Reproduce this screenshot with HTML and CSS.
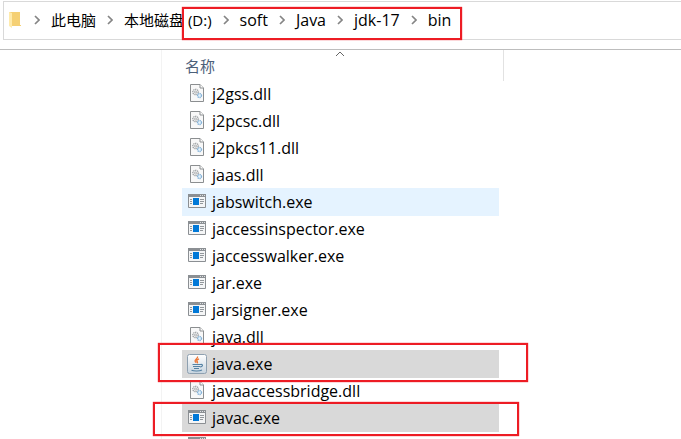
FILE: index.html
```html
<!DOCTYPE html>
<html lang="zh-CN">
<head>
<meta charset="utf-8">
<title>bin</title>
<link rel="stylesheet" href="styles.css">
</head>
<body>
<svg class="defs" aria-hidden="true">
  <symbol id="chevron" viewBox="0 0 6 10"><path d="M1 1l4 4-4 4" fill="none" stroke="#858585" stroke-width="1.7"/></symbol>
  <symbol id="dll" viewBox="0 0 20 20">
    <path d="M3.5 .5H13l3.500 3.500v13.500h-13z" fill="#f8f8f8" stroke="#8b8e90"/>
    <path d="M13 .5v3.500h3.500" fill="#fff" stroke="#8b8e90"/>
    <circle cx="8.500" cy="8" r="2.700" fill="#f4f4f4" stroke="#9a9ea1" stroke-width="1.300" stroke-dasharray="1.300 .7"/>
    <circle cx="8.500" cy="8" r="1" fill="#fff" stroke="#8e9295" stroke-width=".7"/>
    <circle cx="12.500" cy="11.500" r="2" fill="#e5f2fb" stroke="#86b3d8" stroke-width="1.400" stroke-dasharray="1.200 .5"/>
  </symbol>
  <symbol id="exe" viewBox="0 0 20 20">
    <path d="M1.500 2.500h17v13h-17z" fill="#f4f5f6" stroke="#8b8f93"/>
    <path d="M1 2h18v3H1z" fill="#8b8f93"/>
    <path d="M13 3h1v1h-1zM15 3h1v1h-1zM17 3h1v1h-1z" fill="#dde0e2"/>
    <path d="M6 6h6v7H6z" fill="#0078d7"/>
    <path d="M3 7.500h2M3 9.500h2M3 11.500h2M13 7.500h4M13 9.500h4M13 11.500h3" stroke="#92979b"/>
  </symbol>
  <symbol id="java" viewBox="0 0 20 20">
    <linearGradient id="tile" x1="0" y1="0" x2="0" y2="1"><stop stop-color="#fff"/><stop offset="1" stop-color="#c7d4df"/></linearGradient>
    <rect x=".5" y=".5" width="19" height="19" rx="2" fill="url(#tile)" stroke="#8ea0b0"/>
    <path d="M10.500 2.500c1 2-3.500 3-2.300 5l1 1.200M12 4.800c-3 1.200-2.500 2-1.600 3 .4.500 0 1-.5 1.500" fill="none" stroke="#ed7534" stroke-width="1.300"/>
    <path d="M5.500 10.500h8M6 12.500h7M7 14.500h5M13.500 10.500c3-.6 2.500 2.300-.5 2.500M4.500 16.300c2.500 1 8 1 10.500-.3" fill="none" stroke="#5482a4" stroke-width="1.100"/>
  </symbol>
</svg>
<header class="toolbar">
  <nav class="address" aria-label="路径">
    <svg class="folder" viewBox="0 0 12 18" aria-hidden="true"><path d="M0 1h11v13h1v1H3z" fill="#f5d074"/><path d="M0 1l3 1v15l-3-2z" fill="#ffebac"/></svg>
    <svg class="chevron"><use href="#chevron"/></svg>
    <a class="crumb han" href="#">此电脑</a>
    <svg class="chevron"><use href="#chevron"/></svg>
    <a class="crumb han" href="#">本地磁盘 (D:)</a>
    <svg class="chevron"><use href="#chevron"/></svg>
    <a class="crumb" href="#">soft</a>
    <svg class="chevron"><use href="#chevron"/></svg>
    <a class="crumb" href="#">Java</a>
    <svg class="chevron"><use href="#chevron"/></svg>
    <a class="crumb" href="#">jdk-17</a>
    <svg class="chevron"><use href="#chevron"/></svg>
    <a class="crumb" href="#">bin</a>
    <span class="mark mark-path"></span>
  </nav>
</header>
<div class="explorer">
  <aside class="side"></aside>
  <main class="content">
    <button class="column han" type="button">名称<svg class="sort" viewBox="0 0 10 6" aria-hidden="true"><path d="M1 5l4-4 4 4" fill="none" stroke="#666"/></svg></button>
    <ul class="files">
      <li class="file"><svg class="icon"><use href="#dll"/></svg>j2gss.dll</li>
      <li class="file"><svg class="icon"><use href="#dll"/></svg>j2pcsc.dll</li>
      <li class="file"><svg class="icon"><use href="#dll"/></svg>j2pkcs11.dll</li>
      <li class="file"><svg class="icon"><use href="#dll"/></svg>jaas.dll</li>
      <li class="file hover"><svg class="icon"><use href="#exe"/></svg>jabswitch.exe</li>
      <li class="file"><svg class="icon"><use href="#exe"/></svg>jaccessinspector.exe</li>
      <li class="file"><svg class="icon"><use href="#exe"/></svg>jaccesswalker.exe</li>
      <li class="file"><svg class="icon"><use href="#exe"/></svg>jar.exe</li>
      <li class="file"><svg class="icon"><use href="#exe"/></svg>jarsigner.exe</li>
      <li class="file"><svg class="icon"><use href="#dll"/></svg>java.dll</li>
      <li class="file selected"><svg class="icon"><use href="#java"/></svg>java.exe<span class="mark mark-java"></span></li>
      <li class="file"><svg class="icon"><use href="#dll"/></svg>javaaccessbridge.dll</li>
      <li class="file selected"><svg class="icon"><use href="#exe"/></svg>javac.exe<span class="mark mark-javac"></span></li>
      <li class="file"><svg class="icon"><use href="#exe"/></svg></li>
    </ul>
  </main>
</div>
</body>
</html>
```
FILE: styles.css
```css
* { box-sizing: border-box; }
body {
  margin: 0;
  height: 100vh;
  overflow: hidden;
  display: flex;
  flex-direction: column;
  background: #fff;
  color: #000;
  font: 16px/20px "Open Sans", "Noto Sans CJK SC", sans-serif;
}
.defs { position: absolute; width: 0; height: 0; }
.toolbar {
  flex: none;
  padding: 1px 0 9px 3px;
  border-bottom: 1px solid #bdbdbd;
}
.address {
  position: relative;
  display: flex;
  align-items: center;
  gap: 11px;
  height: 39px;
  padding: 0 0 2px 5px;
  border: 1px solid #d9d9d9;
  border-right: 0;
}
.folder { width: 12px; height: 18px; margin-right: 2px; }
.chevron { width: 6px; height: 10px; }
.crumb { color: inherit; text-decoration: none; white-space: pre; }
.crumb.han, .column.han { font-size: 15px; }
.explorer { flex: 1; min-height: 0; display: flex; }
.side { width: 162px; border-right: 1px solid #f3f3f3; }
.content { flex: 1; min-width: 0; }
.column {
  position: relative;
  display: block;
  width: 342px;
  height: 31px;
  margin: 0 0 -1px;
  padding: 0 0 0 23px;
  border: 0;
  border-right: 1px solid #e2e2e2;
  background: none;
  color: #4c607a;
  font: inherit;
  text-align: left;
}
.sort { position: absolute; top: 1px; left: 173px; width: 10px; height: 6px; }
.files {
  width: 317px;
  margin: 0 0 0 20px;
  padding: 0;
  list-style: none;
}
.file {
  position: relative;
  display: flex;
  align-items: center;
  gap: 5px;
  height: 28px;
  margin-bottom: -1px;
  padding-left: 5px;
}
.icon { flex: none; width: 20px; height: 20px; }
.hover { background: #e5f3ff; }
.selected { background: #d9d9d9; }
.mark {
  position: absolute;
  z-index: 1;
  border: 2px solid #ed1c24;
  box-shadow: 0 0 1px #ed1c24;
  pointer-events: none;
}
.mark-path { left: 178px; top: 5px; width: 280px; height: 33px; }
.mark-java { left: -24px; top: -7px; width: 370px; height: 39px; }
.mark-javac { left: -29px; top: -2px; width: 366px; height: 34px; }
```
